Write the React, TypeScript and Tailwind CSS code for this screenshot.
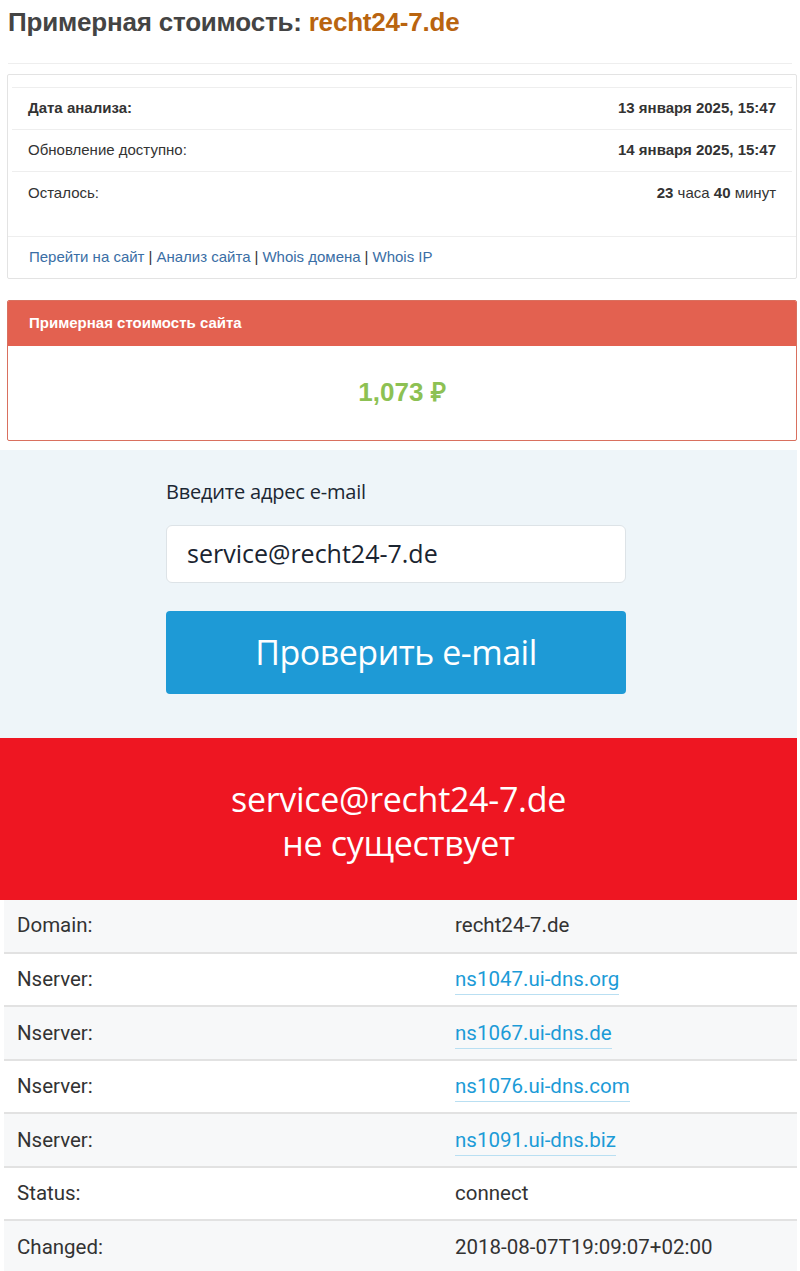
import React from 'react';

const info = [
  { label: 'Дата анализа:', value: '13 января 2025, 15:47', bold: true },
  { label: 'Обновление доступно:', value: '14 января 2025, 15:47', bold: false },
];

const whois = [
  { label: 'Domain:', value: 'recht24-7.de', link: false },
  { label: 'Nserver:', value: 'ns1047.ui-dns.org', link: true },
  { label: 'Nserver:', value: 'ns1067.ui-dns.de', link: true },
  { label: 'Nserver:', value: 'ns1076.ui-dns.com', link: true },
  { label: 'Nserver:', value: 'ns1091.ui-dns.biz', link: true },
  { label: 'Status:', value: 'connect', link: false },
  { label: 'Changed:', value: '2018-08-07T19:09:07+02:00', link: false },
];

export default function App() {
  return (
    <div className="w-[800px] bg-white font-['Liberation_Sans',Arial,sans-serif] text-[#333]">
      {/* Title */}
      <div className="px-[8px] pt-[6px]">
        <h1 className="text-[26px] leading-[32px] font-bold text-[#444] tracking-[-0.2px]">
          Примерная стоимость: <span className="text-[#b9640f]">recht24-7.de</span>
        </h1>
        <div className="mt-[25px] border-t border-[#eee]" />
      </div>

      {/* Info card */}
      <div className="mx-[7px] mt-[10px] border border-[#e3e3e3] rounded-[2px] w-[790px]">
        <div className="px-[4px] pt-[12px] pb-[22px]">
          <table className="w-full text-[15px]">
            <tbody>
              {info.map((r) => (
                <tr key={r.label} className="border-t border-[#eee] h-[42px]">
                  <td className={`px-[16px] ${r.bold ? 'font-bold' : ''}`}>{r.label}</td>
                  <td className="px-[16px] text-right font-bold">{r.value}</td>
                </tr>
              ))}
              <tr className="border-t border-[#eee] h-[42px]">
                <td className="px-[16px]">Осталось:</td>
                <td className="px-[16px] text-right">
                  <b>23</b> часа <b>40</b> минут
                </td>
              </tr>
            </tbody>
          </table>
        </div>
        <div className="border-t border-[#eee] h-[42px] flex items-center px-[21px] text-[15px] text-[#3a6ea5]">
          <a>Перейти на сайт</a>
          <span className="text-[#333] mx-[4px]">|</span>
          <a>Анализ сайта</a>
          <span className="text-[#333] mx-[4px]">|</span>
          <a>Whois домена</a>
          <span className="text-[#333] mx-[4px]">|</span>
          <a>Whois IP</a>
        </div>
      </div>

      {/* Price panel */}
      <div className="mx-[7px] mt-[21px] w-[790px] border border-[#d9705f] rounded-[2px] overflow-hidden">
        <div className="h-[45px] bg-[#e36150] flex items-center px-[21px] text-white text-[15px] font-bold">
          Примерная стоимость сайта
        </div>
        <div className="h-[94px] flex items-center justify-center text-[#8dc153] text-[26px] font-bold">
          1,073 ₽
        </div>
      </div>

      {/* Email form */}
      <div className="mt-[9px] w-[797px] bg-[#eef5f9] pt-[30px] pb-[44px] font-['Open_Sans',sans-serif]">
        <div className="w-[460px] ml-[166px]">
          <div className="text-[20px] text-[#1b2733] tracking-[-0.2px] leading-[24px]">Введите адрес e-mail</div>
          <div className="mt-[21px] h-[58px] bg-white border border-[#dde3e7] rounded-[6px] flex items-center px-[20px] text-[25px] text-[#1a2430]">
            service@recht24-7.de
          </div>
          <button className="mt-[28px] w-full h-[83px] bg-[#1e9ad6] rounded-[4px] text-white text-[34px] tracking-[-0.5px]">
            Проверить e-mail
          </button>
        </div>
      </div>

      {/* Result */}
      <div className="w-[797px] h-[162px] bg-[#ee1622] flex flex-col items-center justify-center text-white text-[34px] leading-[44px] font-['Open_Sans',sans-serif] tracking-[-0.3px] pt-[4px]">
        <div>service@recht24-7.de</div>
        <div>не существует</div>
      </div>

      {/* Whois table */}
      <div className="ml-[4px] w-[793px] font-['Roboto',sans-serif] text-[20.5px] text-[#333]">
        {whois.map((r, i) => (
          <div
            key={i}
            className={`flex items-center ${i > 0 ? 'h-[53.6px] border-t-2 border-[#e2e2e2]' : 'h-[52px]'} ${i % 2 === 0 ? 'bg-[#f7f8f9]' : 'bg-white'}`}
          >
            <div className="w-[451px] pl-[13px]">{r.label}</div>
            <div>
              {r.link ? (
                <a className="text-[#1c9bd7] border-b border-[#b9dff2] pb-[3px]">{r.value}</a>
              ) : (
                r.value
              )}
            </div>
          </div>
        ))}
      </div>
    </div>
  );
}
